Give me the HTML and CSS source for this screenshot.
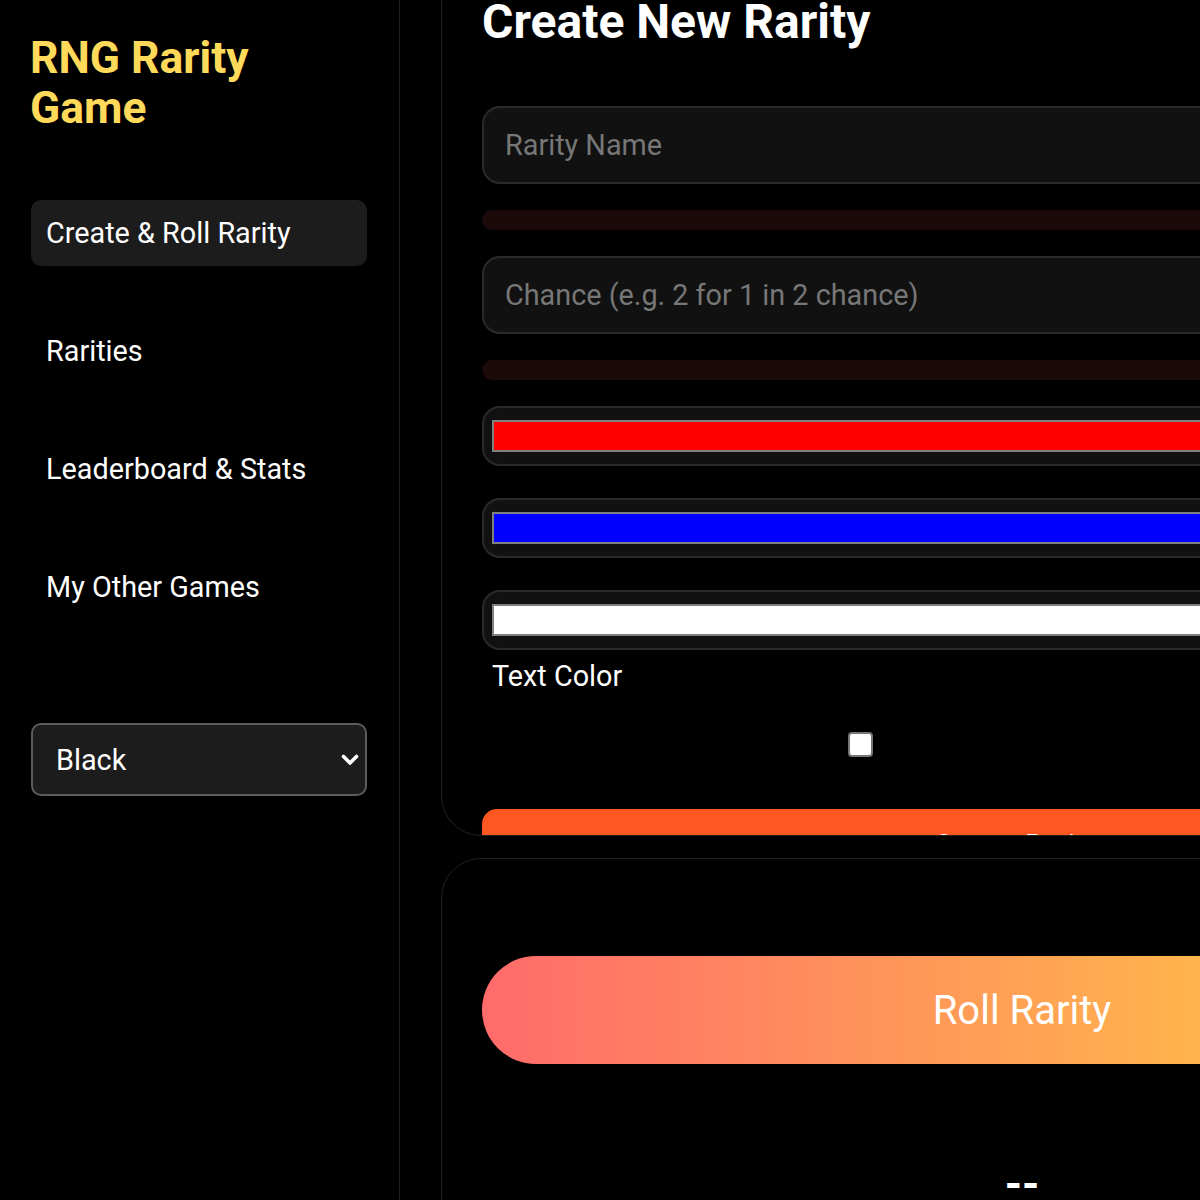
FILE: index.html
```html
<!DOCTYPE html>
<html lang="en">
<head>
<meta charset="utf-8">
<title>RNG Rarity Game</title>
<link rel="stylesheet" href="styles.css">
</head>
<body>
<div class="app">
  <aside class="sidebar">
    <h1 class="logo">RNG Rarity<br>Game</h1>
    <nav class="nav">
      <a class="nav-item active">Create &amp; Roll Rarity</a>
      <a class="nav-item">Rarities</a>
      <a class="nav-item">Leaderboard &amp; Stats</a>
      <a class="nav-item">My Other Games</a>
    </nav>
    <div class="theme-select">
      <span>Black</span>
      <svg class="chevron" width="18" height="12" viewBox="0 0 18 12" aria-hidden="true"><polyline points="2.5,2.5 9,9 15.5,2.5" fill="none" stroke="#fff" stroke-width="3.6" stroke-linecap="round" stroke-linejoin="round"/></svg>
    </div>
  </aside>
  <main class="main">
    <section class="card create-card">
      <h2 class="card-title">Create New Rarity</h2>
      <input class="field" type="text" placeholder="Rarity Name">
      <div class="error-bar"></div>
      <input class="field" type="text" placeholder="Chance (e.g. 2 for 1 in 2 chance)">
      <div class="error-bar"></div>
      <div class="color-field"><span class="swatch swatch-red"></span></div>
      <div class="color-field"><span class="swatch swatch-blue"></span></div>
      <div class="color-field last"><span class="swatch swatch-white"></span></div>
      <div class="label-text">Text Color</div>
      <div class="checkbox-row"><input class="checkbox" type="checkbox"></div>
      <button class="create-btn">Create Rarity</button>
    </section>
    <section class="card roll-card">
      <button class="roll-btn">Roll Rarity</button>
      <div class="result">--</div>
    </section>
  </main>
</div>
</body>
</html>
```

FILE: styles.css
```css
* { box-sizing: border-box; }

html, body {
  margin: 0;
  height: 100%;
  overflow: hidden;
  background: #000;
}

body {
  font-family: Roboto, "Noto Sans", "Liberation Sans", sans-serif;
  color: #fff;
}

.app {
  display: flex;
  height: 100vh;
}

/* Sidebar */
.sidebar {
  flex: 0 0 400px;
  border-right: 1px solid #1f1f1f;
  padding: 30px 32px 0 30px;
  display: flex;
  flex-direction: column;
}

.logo {
  margin: 3px 0 67px;
  font-size: 44.4px;
  line-height: 50px;
  font-weight: 700;
  color: #ffd95a;
}

.nav {
  display: flex;
  flex-direction: column;
  gap: 52px;
  margin-left: 1px;
}

.nav-item {
  height: 66px;
  display: flex;
  align-items: center;
  padding: 0 16px 0 15px;
  font-size: 28.8px;
  color: #fff;
  border-radius: 10px;
}

.nav-item.active {
  background: #1c1c1c;
}

.theme-select {
  margin-top: 103px;
  margin-left: 1px;
  height: 73px;
  border: 2px solid #5c5c5c;
  border-radius: 10px;
  background: #1c1c1c;
  display: flex;
  align-items: center;
  justify-content: space-between;
  padding: 0 6px 0 23px;
  font-size: 28.8px;
  color: #fff;
}

.chevron { display: block; }

/* Main */
.main {
  flex: 1;
  min-width: 0;
  padding-left: 41px;
  display: flex;
  flex-direction: column;
  gap: 22px;
  overflow: hidden;
}

.card {
  flex: none;
  width: 1158px;
  border: 1px solid #222;
  border-radius: 40px;
  padding: 40px;
  overflow: hidden;
}

.create-card {
  height: 882px;
  margin-top: -46px;
}

.card-title {
  margin: 0 0 57px;
  font-size: 48px;
  line-height: 54px;
  font-weight: 700;
  color: #fff;
}

.field {
  display: block;
  width: 100%;
  height: 78px;
  margin: 0;
  background: #111;
  border: 2px solid #2a2a2a;
  border-radius: 18px;
  padding: 0 21px;
  font-family: Roboto, "Noto Sans", sans-serif;
  font-size: 28.8px;
  color: #fff;
  outline: none;
}

.field::placeholder { color: #777; }

.error-bar {
  height: 20px;
  margin: 26px 0;
  background: #1c0909;
  border-radius: 10px;
}

.color-field {
  height: 60px;
  margin-bottom: 32px;
  background: #111;
  border: 2px solid #2a2a2a;
  border-radius: 18px;
  padding: 0 8px;
  display: flex;
  align-items: center;
}

.color-field.last { margin-bottom: 0; }

.swatch {
  flex: 1;
  height: 32px;
  border: 2px solid #808080;
}

.swatch-red { background: #ff0000; }
.swatch-blue { background: #0000ff; }
.swatch-white { background: #ffffff; }

.label-text {
  margin: 10px 0 0 10px;
  font-size: 28.8px;
  line-height: 33px;
  color: #fff;
}

.checkbox-row {
  margin-top: 39px;
  padding-left: 366px;
  height: 25px;
}

.checkbox {
  appearance: none;
  -webkit-appearance: none;
  display: block;
  margin: 0;
  width: 25px;
  height: 25px;
  background: #fff;
  border: 2px solid #767676;
  border-radius: 4px;
}

.create-btn {
  display: block;
  margin-top: 52px;
  width: 1068px;
  padding: 20px 0 15px;
  border: none;
  border-radius: 15px;
  background: #ff5722;
  color: #fff;
  font-family: Roboto, "Noto Sans", sans-serif;
  font-size: 28.8px;
  line-height: 33px;
  text-align: center;
}

.roll-card {
  padding-top: 97px;
}

.roll-btn {
  display: block;
  width: 1080px;
  height: 108px;
  border: none;
  border-radius: 54px;
  background: linear-gradient(90deg, #ff6b6b, #ffd93d);
  color: #fff;
  font-family: Roboto, "Noto Sans", sans-serif;
  font-size: 40px;
  text-align: center;
}

.result {
  margin-top: 94px;
  width: 1080px;
  text-align: center;
  font-size: 44px;
  font-weight: 700;
  color: #fff;
}
```
